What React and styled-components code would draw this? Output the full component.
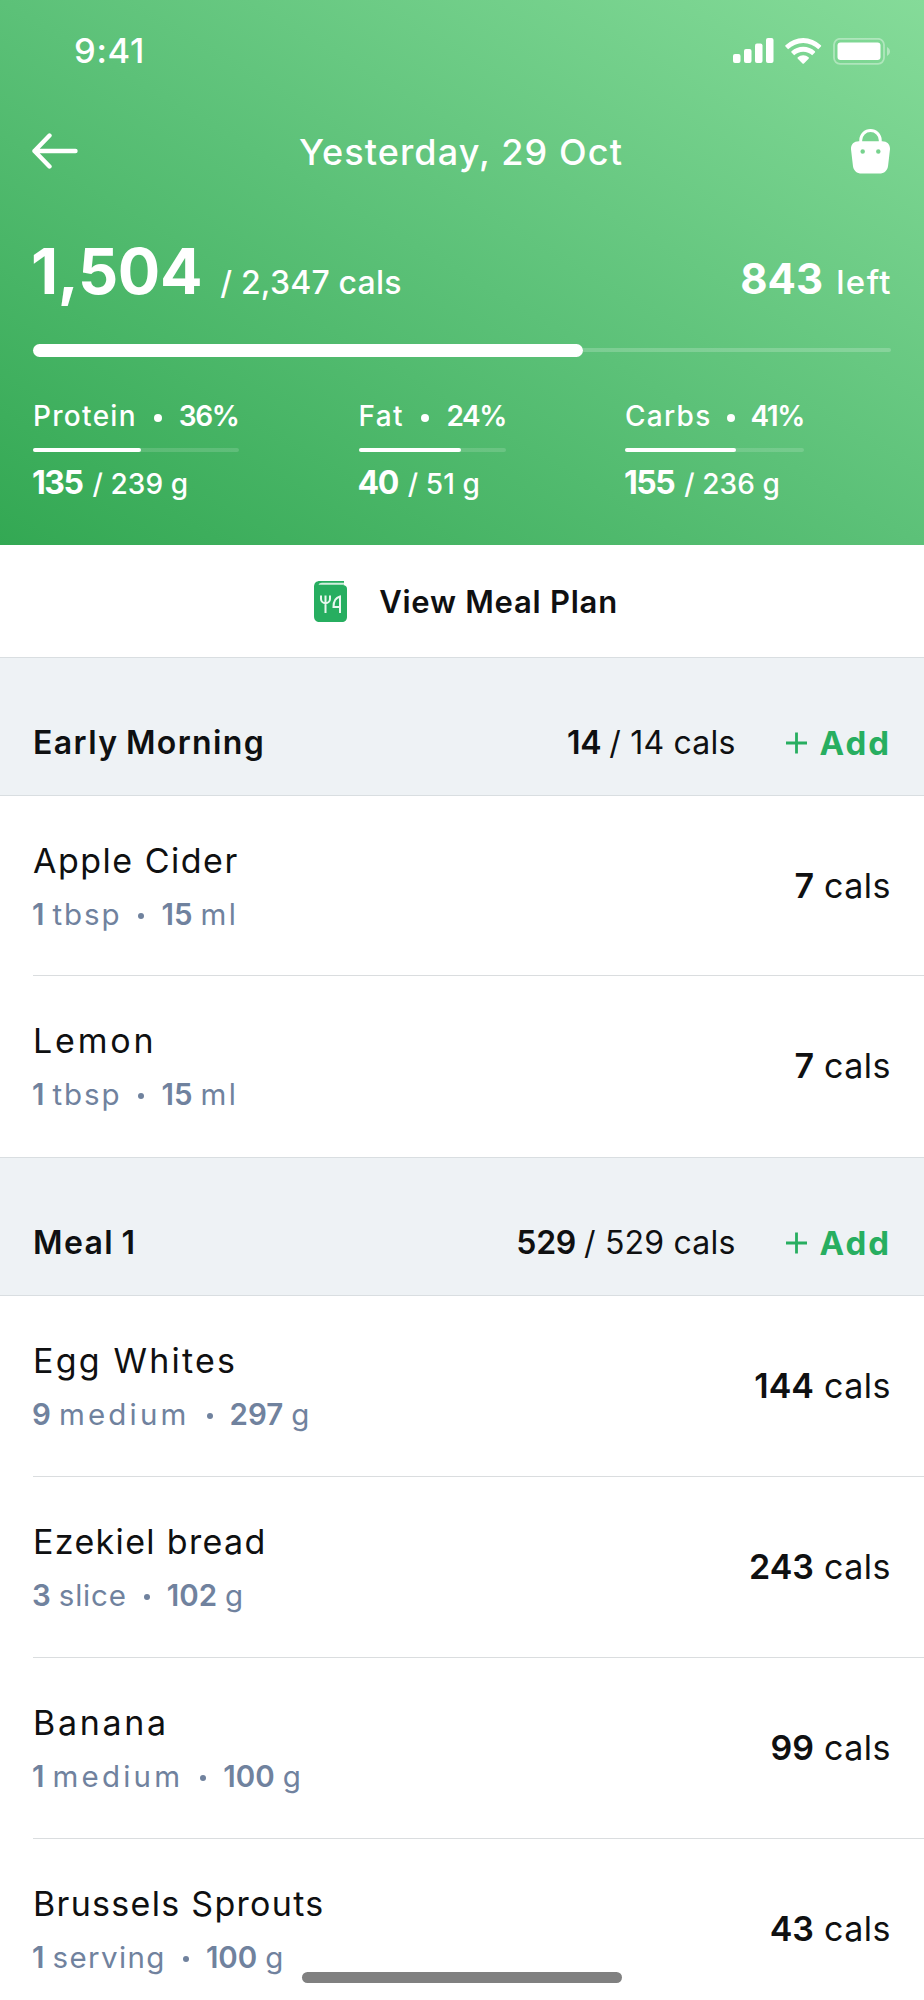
import React from 'react'
import styled, { createGlobalStyle } from 'styled-components'

const macros = [
    { name: 'Protein', percent: '36%', value: '135', total: '239', width: 205.5, fill: 52.5, left: 0 },
    { name: 'Fat', percent: '24%', value: '40', total: '51', width: 147.5, fill: 69.5, left: 120 },
    { name: 'Carbs', percent: '41%', value: '155', total: '236', width: 179, fill: 62, left: 119 },
]

// track / unitTrack: letter spacing of the name and of the unit
const meals = [
    {
        name: 'Early Morning',
        value: '14',
        total: '14',
        items: [
            { name: 'Apple Cider', track: 1.5, num: '1', unit: 'tbsp', unitTrack: 1.9, amount: '15', measure: 'ml', cals: '7' },
            { name: 'Lemon', track: 2.8, num: '1', unit: 'tbsp', unitTrack: 1.9, amount: '15', measure: 'ml', cals: '7' },
        ],
    },
    {
        name: 'Meal 1',
        value: '529',
        total: '529',
        items: [
            { name: 'Egg Whites', track: 2.2, num: '9', unit: 'medium', unitTrack: 3.2, amount: '297', measure: 'g', cals: '144' },
            { name: 'Ezekiel bread', track: 1.35, num: '3', unit: 'slice', unitTrack: 0.8, amount: '102', measure: 'g', cals: '243' },
            { name: 'Banana', track: 2.7, num: '1', unit: 'medium', unitTrack: 3.2, amount: '100', measure: 'g', cals: '99' },
            { name: 'Brussels Sprouts', track: 1.3, num: '1', unit: 'serving', unitTrack: 1.4, amount: '100', measure: 'g', cals: '43' },
        ],
    },
]

const StatusIcons = () => (
    <svg width="158" height="28" viewBox="0 0 158 28" fill="#fff">
        <rect x="0" y="16" width="7.500" height="9" rx="2" />
        <rect x="11" y="11" width="7.500" height="14" rx="2" />
        <rect x="22" y="5.500" width="7.500" height="19.500" rx="2" />
        <rect x="33" y="0" width="7.500" height="25" rx="2" />
        <path d="M52.500 7.200a25.600 25.600 0 0 1 35.400 0q.6.7 0 1.400l-2.600 2.600a21.600 21.600 0 0 0-30.200 0l-2.600-2.600q-.6-.7 0-1.400z" />
        <path d="M58.500 13.300a17 17 0 0 1 23.400 0q.6.7 0 1.300l-2.700 2.700a13 13 0 0 0-18 0l-2.700-2.700q-.6-.6 0-1.300z" />
        <path d="M64.800 19.300a8.500 8.500 0 0 1 10.800 0q.7.700 0 1.400l-4.700 4.800q-.7.600-1.400 0l-4.700-4.800q-.7-.7 0-1.400z" />
        <rect x="101" y="0.800" width="50" height="25" rx="6" fill="none" stroke="#fff" strokeWidth="1.800" opacity=".38" />
        <rect x="104.500" y="4.500" width="43" height="17.500" rx="3" />
        <path d="M154 9c4 2 4 7 0 9z" opacity=".4" />
    </svg>
)

const Arrow = () => (
    <svg width="46" height="36" viewBox="0 0 46 36" fill="none" stroke="#fff" strokeWidth="4.400" strokeLinecap="round" strokeLinejoin="round">
        <path d="M43.500 18H2.500M17.500 2.500L2.500 18L17.500 33.500" />
    </svg>
)

const Bag = () => (
    <svg width="41" height="46" viewBox="0 0 42 46">
        <path d="M11 15v-3a10 10 0 0 1 20 0v3" fill="none" stroke="#fff" strokeWidth="3" />
        <path
            fill="#fff"
            fillRule="evenodd"
            d="M9 13h24c5 0 8 3 8 8l-2 17c-.5 5-4 8-9 8H12c-5 0-8.500-3-9-8L1 21c0-5 3-8 8-8zM13 21.200a2.300 2.300 0 1 0 0 4.600a2.300 2.300 0 1 0 0-4.600zM29 21.200a2.300 2.300 0 1 0 0 4.600a2.300 2.300 0 1 0 0-4.600z"
        />
    </svg>
)

const MealBook = () => (
    <svg width="33" height="41" viewBox="0 0 33 41">
        <path d="M6 0H30V4H28C31 4 33 5 33 8V36C33 39 31 41 28 41H6C2 41 0 39 0 35V6C0 2 2 0 6 0Z" fill="#27ae60" />
        <path d="M4.500 3.700Q5 1.800 8 1.800H30V3.700H6.500Z" fill="#d3efdf" />
        <path
            d="M7 14.500v3.500c0 5.500 9 5.500 9 0v-3.500M11.500 14.500v17.500M26 32V15.500c-4 1-6.500 5-6.500 10.500h6.500"
            fill="none"
            stroke="#e9f7ef"
            strokeWidth="2"
        />
    </svg>
)

const Plus = () => (
    <svg width="21" height="22" viewBox="0 0 21 22" stroke="#27ae60" strokeWidth="2.800">
        <path d="M10.500 .5V21.500M0 11H21" />
    </svg>
)

const Food = ({ item }) => (
    <FoodRow>
        <div>
            <FoodName $track={item.track}>{item.name}</FoodName>
            <Portion>
                <b>{item.num}</b>
                <Unit $track={item.unitTrack}>{item.unit}</Unit>
                <Dot />
                <b>{item.amount}</b>
                <Unit $track={2.500}>{item.measure}</Unit>
            </Portion>
        </div>
        <FoodCals>
            <b>{item.cals}</b>
            <span>cals</span>
        </FoodCals>
    </FoodRow>
)

export default function App() {
    return (
        <Screen>
            <GlobalStyle />
            <Header>
                <StatusBar>
                    <Time>9:41</Time>
                    <StatusIcons />
                </StatusBar>
                <NavBar>
                    <Arrow />
                    <Title>Yesterday, 29 Oct</Title>
                    <Bag />
                </NavBar>
                <Summary>
                    <Eaten>1,504</Eaten>
                    <Goal>/ 2,347 cals</Goal>
                    <Left>843</Left>
                    <LeftLabel>left</LeftLabel>
                </Summary>
                <Progress>
                    <ProgressFill />
                    <ProgressRest />
                </Progress>
                <Macros>
                    {macros.map((macro) => (
                        <Macro key={macro.name} $width={macro.width} $left={macro.left}>
                            <MacroTop>
                                <span>{macro.name}</span>
                                <Dot $big />
                                <b>{macro.percent}</b>
                            </MacroTop>
                            <MacroTrack>
                                <div style={{ width: `${macro.fill}%` }} />
                            </MacroTrack>
                            <MacroBottom>
                                <b>{macro.value}</b>
                                <span>/ {macro.total} g</span>
                            </MacroBottom>
                        </Macro>
                    ))}
                </Macros>
            </Header>
            <PlanButton>
                <MealBook />
                <span>View Meal Plan</span>
            </PlanButton>
            {meals.map((meal) => (
                <section key={meal.name}>
                    <MealHeader>
                        <h2>{meal.name}</h2>
                        <MealCals>
                            <b>{meal.value}</b>
                            <span>/ {meal.total} cals</span>
                        </MealCals>
                        <AddButton>
                            <Plus />
                            Add
                        </AddButton>
                    </MealHeader>
                    {meal.items.map((item) => (
                        <Food key={item.name} item={item} />
                    ))}
                </section>
            ))}
            <HomeIndicator />
        </Screen>
    )
}

const GlobalStyle = createGlobalStyle`
    * {
        box-sizing: border-box;
        margin: 0;
        padding: 0;
    }
    body {
        background: #ffffff;
        font-family: Inter, sans-serif;
        color: #0f1011;
    }
    b {
        font-weight: 600;
    }
`

const Screen = styled.div`
    position: relative;
    width: 924px;
    height: 2000px;
    overflow: hidden;
    background: #ffffff;
`

const Header = styled.header`
    height: 545px;
    padding: 0 33px;
    color: #ffffff;
    background: linear-gradient(to top right, #33a853, #5cc178 50%, #85db99);
`

const StatusBar = styled.div`
    display: flex;
    justify-content: space-between;
    align-items: center;
    height: 104px;
    padding-left: 41px;
`

const Time = styled.span`
    font-weight: 500;
    font-size: 34.5px;
    line-height: 40px;
    padding-bottom: 3px;
    letter-spacing: 0.7px;
`

const NavBar = styled.nav`
    display: flex;
    align-items: center;
    justify-content: space-between;
    height: 94px;
    svg:first-child {
        margin-left: -1px;
    }
`

const Title = styled.h1`
    margin-right: 6px;
    padding-top: 2px;
    font-weight: 500;
    font-size: 36px;
    line-height: 40px;
    letter-spacing: 1.1px;
`

const Summary = styled.div`
    display: flex;
    align-items: baseline;
    height: 145px;
    padding-top: 35px;
    white-space: nowrap;
`

const Eaten = styled.strong`
    margin-left: -2px;
    font-weight: 700;
    font-size: 63px;
    line-height: 76px;
    letter-spacing: -0.4px;
`

const Goal = styled.span`
    margin-left: 18px;
    font-weight: 500;
    font-size: 32px;
    letter-spacing: 0.2px;
`

const Left = styled.strong`
    margin-left: auto;
    font-weight: 700;
    font-size: 42px;
`

const LeftLabel = styled.span`
    margin: 0 -1px 0 13px;
    font-weight: 500;
    font-size: 33px;
    letter-spacing: 1.4px;
`

const Progress = styled.div`
    display: flex;
    align-items: center;
    height: 14px;
`

const ProgressFill = styled.div`
    width: 550px;
    height: 13px;
    border-radius: 7px;
    background: #ffffff;
`

const ProgressRest = styled.div`
    flex: 1;
    height: 4px;
    border-radius: 0 2px 2px 0;
    background: rgba(255, 255, 255, 0.2);
`

const Macros = styled.div`
    display: flex;
    padding-top: 42px;
`

const Macro = styled.div`
    width: ${(props) => props.$width}px;
    margin-left: ${(props) => props.$left}px;
    white-space: nowrap;
`

const MacroTop = styled.div`
    display: flex;
    justify-content: space-between;
    align-items: center;
    height: 34px;
    font-weight: 500;
    font-size: 28px;
    span {
        letter-spacing: 1.3px;
    }
    b {
        letter-spacing: -1.4px;
    }
`

const Dot = styled.i`
    flex: none;
    width: ${(props) => (props.$big ? 8 : 6)}px;
    height: ${(props) => (props.$big ? 8 : 6)}px;
    margin-top: 3px;
    border-radius: 50%;
    background: currentColor;
`

const MacroTrack = styled.div`
    height: 4px;
    margin-top: 15px;
    border-radius: 2px;
    background: rgba(255, 255, 255, 0.15);
    div {
        height: 4px;
        border-radius: 2px;
        background: #ffffff;
    }
`

const MacroBottom = styled.div`
    display: flex;
    align-items: baseline;
    gap: 10px;
    margin: 11px 0 0 -1px;
    line-height: 40px;
    font-weight: 500;
    font-size: 28px;
    letter-spacing: 0.1px;
    b {
        font-weight: 700;
        font-size: 32px;
        letter-spacing: -1.5px;
    }
`

const PlanButton = styled.button`
    display: flex;
    align-items: center;
    justify-content: center;
    gap: 32px;
    width: 100%;
    height: 111.5px;
    padding: 1px 0 0 8px;
    border: none;
    background: #ffffff;
    color: #0f1011;
    font-family: inherit;
    font-weight: 600;
    font-size: 31px;
    letter-spacing: 0.75px;
`

const MealHeader = styled.div`
    display: flex;
    align-items: baseline;
    height: 139px;
    padding: 65px 33px 0;
    border-top: 1px solid #d9dee1;
    border-bottom: 1px solid #d9dee1;
    background: #eef2f5;
    line-height: 40px;
    white-space: nowrap;
    h2 {
        font-weight: 600;
        font-size: 32px;
        letter-spacing: 1.4px;
        word-spacing: -2px;
    }
`

const MealCals = styled.div`
    display: flex;
    gap: 8px;
    margin-left: auto;
    font-size: 32px;
    letter-spacing: 0.2px;
    b {
        letter-spacing: -0.3px;
    }
`

const AddButton = styled.button`
    display: flex;
    align-items: center;
    gap: 13px;
    margin-left: 50px;
    border: none;
    background: none;
    color: #27ae60;
    font-family: inherit;
    font-weight: 700;
    font-size: 33px;
    letter-spacing: 2px;
`

const FoodRow = styled.div`
    display: flex;
    justify-content: space-between;
    height: 180.9px;
    margin-left: 33px;
    padding: 45px 33px 0 0;
    border-bottom: 1px solid #dadddf;
    white-space: nowrap;
    &:last-child {
        border-bottom: none;
    }
`

const FoodName = styled.h3`
    font-weight: 400;
    font-size: 34px;
    line-height: 40px;
    letter-spacing: ${(props) => props.$track}px;
`

const Portion = styled.div`
    display: flex;
    align-items: center;
    gap: 8px;
    margin: 14px 0 0 -1px;
    line-height: 38px;
    font-size: 29.5px;
    color: #70829e;
    ${Dot} {
        margin: 4px 9px 0;
    }
`

const Unit = styled.span`
    letter-spacing: ${(props) => props.$track}px;
`

const FoodCals = styled.div`
    display: flex;
    gap: 10px;
    padding-top: 25px;
    font-size: 34px;
    line-height: 40px;
    letter-spacing: 0.5px;
    b {
        letter-spacing: 0;
    }
`

const HomeIndicator = styled.div`
    position: absolute;
    left: 302px;
    bottom: 17px;
    width: 320px;
    height: 11px;
    border-radius: 6px;
    background: #808080;
`
